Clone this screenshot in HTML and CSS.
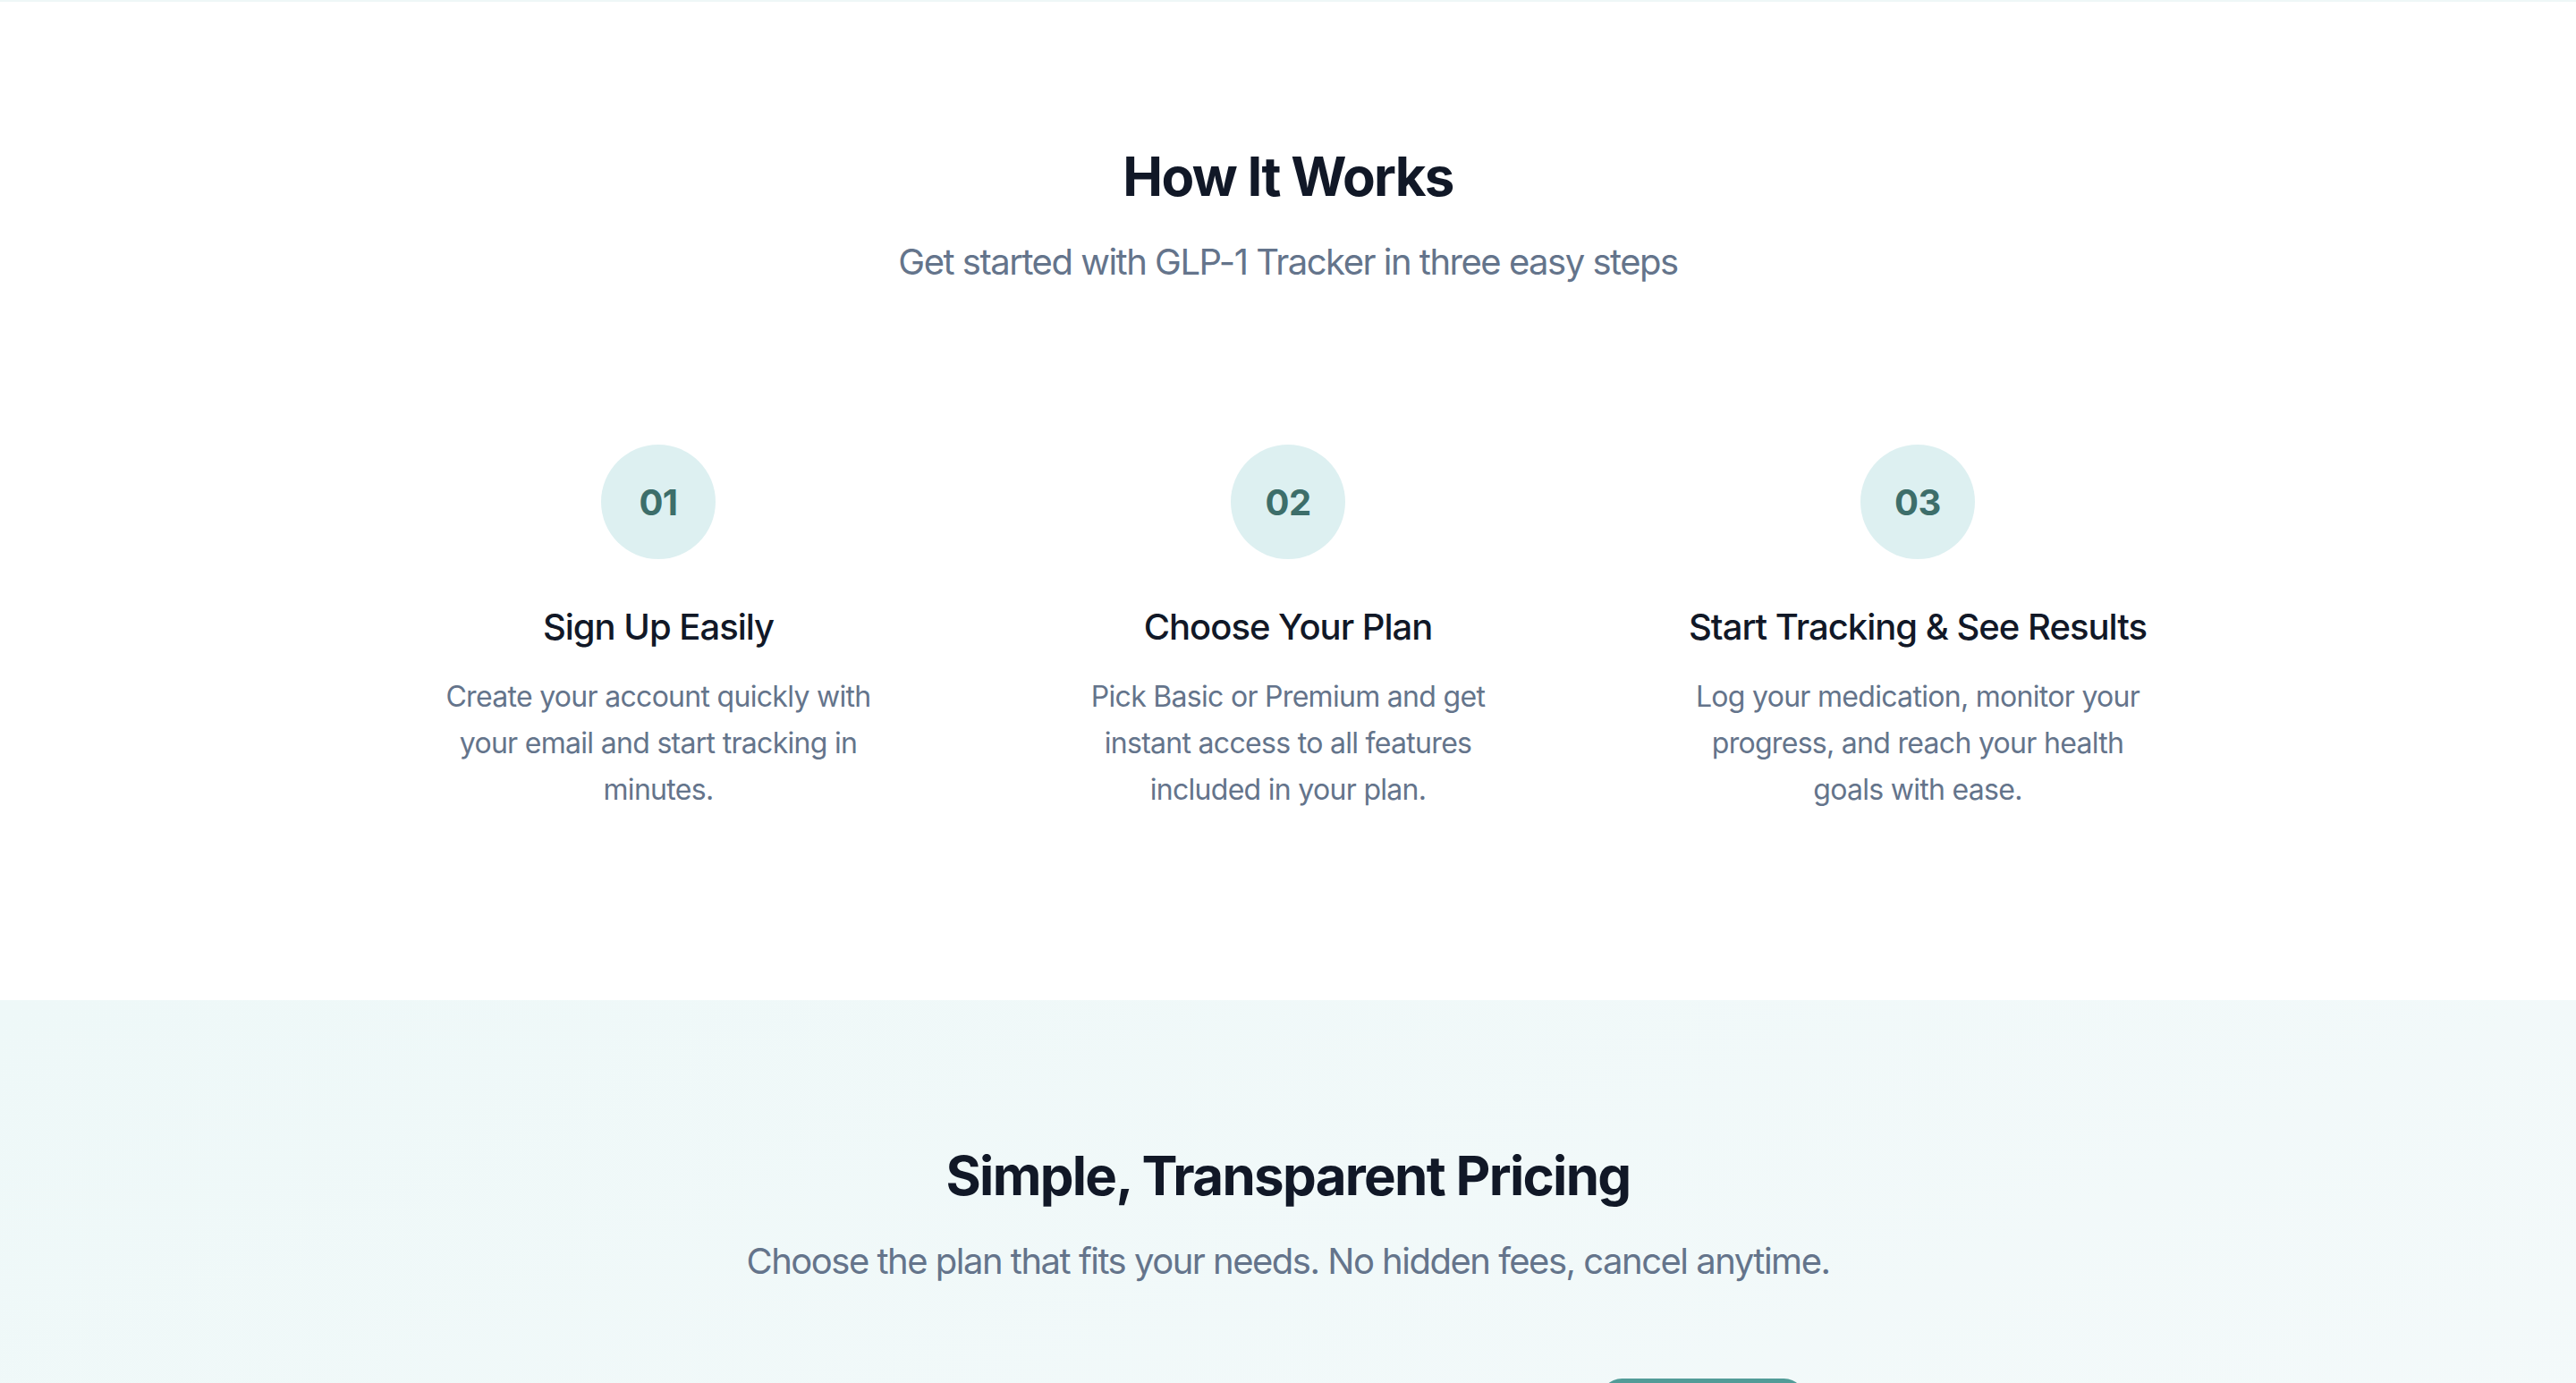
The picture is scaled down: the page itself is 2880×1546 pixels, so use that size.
FILE: index.html
```html
<!DOCTYPE html>
<html lang="en">
<head>
    <meta charset="UTF-8">
    <meta name="viewport" content="width=device-width, initial-scale=1.0">
    <title>GLP-1 Tracker</title>
    <link rel="stylesheet" href="styles.css">
</head>
<body>
    <div class="edge"></div>

    <section class="steps">
        <div class="container">
            <h2 class="section-title">How It Works</h2>
            <p class="section-sub">Get started with GLP-1 Tracker in three easy steps</p>

            <div class="step-grid">
                <div class="step">
                    <div class="step-num">01</div>
                    <h3>Sign Up Easily</h3>
                    <p>Create your account quickly with your email and start tracking in minutes.</p>
                </div>
                <div class="step">
                    <div class="step-num">02</div>
                    <h3>Choose Your Plan</h3>
                    <p>Pick Basic or Premium and get instant access to all features included in your plan.</p>
                </div>
                <div class="step">
                    <div class="step-num">03</div>
                    <h3>Start Tracking &amp; See Results</h3>
                    <p>Log your medication, monitor your progress, and reach your health goals with ease.</p>
                </div>
            </div>
        </div>
    </section>

    <section class="pricing">
        <div class="container">
            <h2 class="section-title">Simple, Transparent Pricing</h2>
            <p class="section-sub">Choose the plan that fits your needs. No hidden fees, cancel anytime.</p>

            <div class="plan-grid">
                <div class="plan">
                    <h3>Basic</h3>
                    <div class="price">$9.99<span>/month</span></div>
                    <ul>
                        <li>Medication logging</li>
                        <li>Weight tracking</li>
                        <li>Dose reminders</li>
                    </ul>
                    <button class="plan-btn">Get Started</button>
                </div>
                <div class="plan featured">
                    <span class="badge">Most Popular</span>
                    <h3>Premium</h3>
                    <div class="price">$19.99<span>/month</span></div>
                    <ul>
                        <li>Everything in Basic</li>
                        <li>Advanced progress charts</li>
                        <li>Side effect insights</li>
                    </ul>
                    <button class="plan-btn">Get Started</button>
                </div>
            </div>
        </div>
    </section>
</body>
</html>
```

FILE: styles.css
```css
body {
    margin: 0;
    font-family: Inter, "Noto Sans", sans-serif;
    background-color: #ffffff;
    color: #111827;
}

.edge {
    height: 2px;
    background-color: #eef7f7;
}

.container {
    max-width: 2048px;
    margin: 0 auto;
    text-align: center;
}

.steps {
    padding: 159px 0 161px;
}

.section-title {
    font-size: 60px;
    line-height: 72px;
    font-weight: 700;
    letter-spacing: -1.7px;
    margin: 0 0 32px;
    color: #111827;
}

.section-sub {
    font-size: 40px;
    line-height: 56px;
    letter-spacing: -1.5px;
    color: #64748b;
    margin: 0 0 128px;
}

.step-grid {
    display: grid;
    grid-template-columns: repeat(3, 1fr);
    gap: 64px;
}

.step {
    padding: 48px;
    display: flex;
    flex-direction: column;
    align-items: center;
}

.step-num {
    width: 128px;
    height: 128px;
    border-radius: 50%;
    background-color: #ddf0f1;
    color: #3d6e6a;
    font-size: 40px;
    font-weight: 700;
    letter-spacing: -0.5px;
    display: flex;
    align-items: center;
    justify-content: center;
    margin-bottom: 48px;
}

.step h3 {
    font-size: 40px;
    line-height: 56px;
    font-weight: 500;
    letter-spacing: -1px;
    margin: 0 0 24px;
    color: #111827;
}

.step p {
    max-width: 530px;
    font-size: 32px;
    line-height: 52px;
    letter-spacing: -0.7px;
    color: #64748b;
    margin: 0;
}

.pricing {
    background: linear-gradient(to bottom right, #eef8f8, #f6fafb);
    padding: 160px 0;
}

.plan-grid {
    max-width: 1792px;
    margin: 0 auto;
    display: grid;
    grid-template-columns: repeat(2, 1fr);
    gap: 64px;
}

.plan {
    position: relative;
    background-color: #ffffff;
    border-radius: 32px;
    padding: 64px;
    border: 2px solid #e5e7eb;
}

.plan.featured {
    border-color: #4f9a96;
}

.badge {
    position: absolute;
    top: -27px;
    left: 50%;
    transform: translateX(-50%);
    background-color: #529c98;
    color: white;
    font-size: 28px;
    font-weight: 600;
    padding: 8px 26px;
    border-radius: 999px;
    white-space: nowrap;
}

.plan h3 {
    font-size: 48px;
    margin: 0 0 24px;
}

.price {
    font-size: 72px;
    font-weight: 700;
}

.price span {
    font-size: 32px;
    font-weight: 400;
    color: #64748b;
}

.plan ul {
    list-style: none;
    padding: 0;
    margin: 48px 0;
    font-size: 32px;
    line-height: 64px;
    color: #475569;
}

.plan-btn {
    width: 100%;
    padding: 24px;
    font-size: 32px;
    font-weight: 600;
    border: none;
    border-radius: 16px;
    background-color: #4f9a96;
    color: white;
    cursor: pointer;
}
```
